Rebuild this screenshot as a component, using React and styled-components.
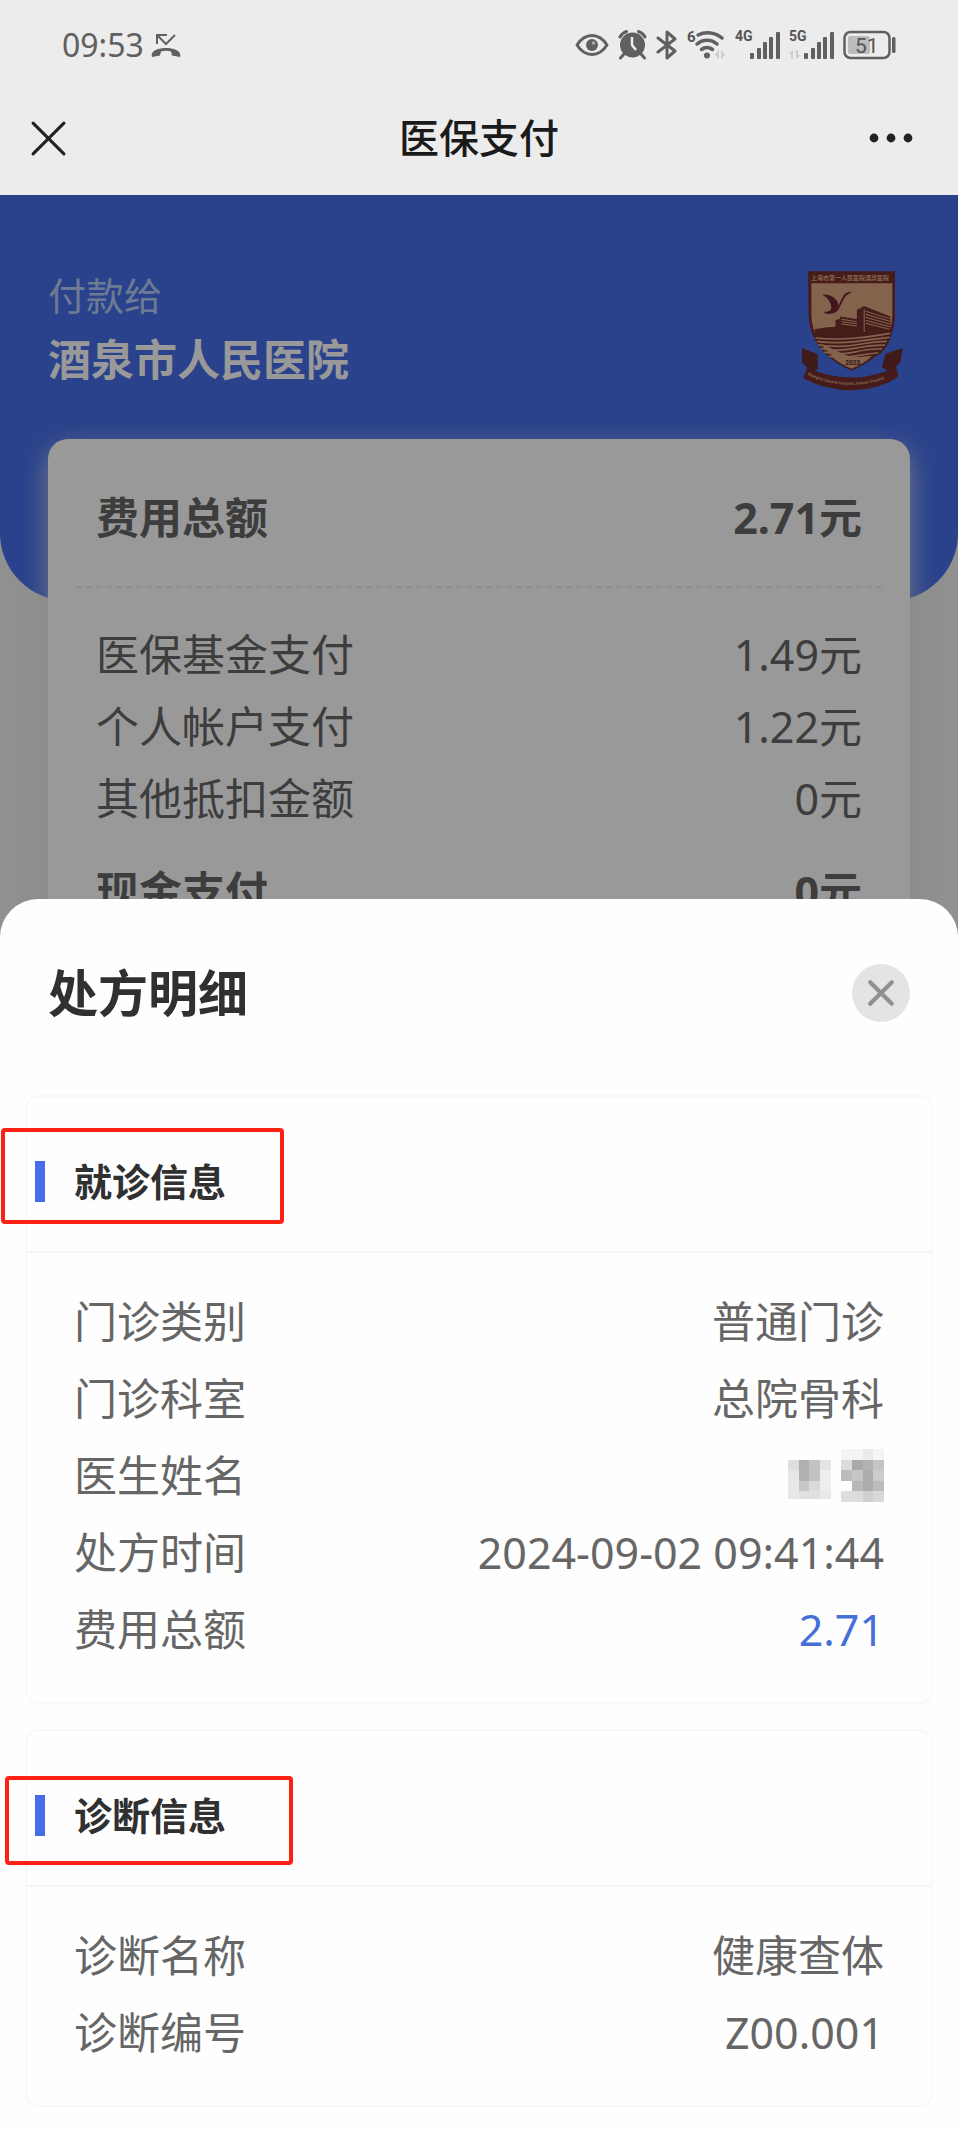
import React from "react";
import styled, { createGlobalStyle } from "styled-components";

const Global = createGlobalStyle`
  * { box-sizing: border-box; }
  body {
    margin: 0;
    background: #fefefe;
    font-family: "Noto Sans", "Noto Sans CJK SC", sans-serif;
    color: #666;
  }
  h1, h2, h3, p, dl, dt, dd { margin: 0; font-weight: inherit; }
  button { border: 0; padding: 0; background: none; font: inherit; cursor: pointer; }
  svg { display: block; flex: none; }
`;

const Header = styled.header`
  background: #ececec;
  padding-bottom: 9px;
`;

const StatusBar = styled.div`
  display: flex;
  align-items: center;
  justify-content: space-between;
  height: 90px;
  padding: 0 62px;
  color: #606060;
`;

const StatusGroup = styled.div`
  display: flex;
  align-items: center;
  gap: ${(p) => p.$gap}px;
`;

const Clock = styled.time`
  font-size: 32px;
  line-height: 40px;
`;

const NavBar = styled.nav`
  display: grid;
  grid-template-columns: 1fr auto 1fr;
  align-items: center;
  height: 96px;
  padding: 0 30px;
  color: #1a1a1a;
`;

const NavTitle = styled.h1`
  font-size: 40px;
  font-weight: 500;
  line-height: 56px;
`;

const IconButton = styled.button`
  display: flex;
  color: #222;
  justify-self: ${(p) => p.$side};
`;

const Stage = styled.main`
  position: relative;
  background: #f0f0f0;
  &::after {
    content: "";
    position: absolute;
    inset: 0;
    background: rgba(0, 0, 0, 0.4);
  }
`;

const Hero = styled.section`
  display: flex;
  justify-content: space-between;
  align-items: flex-start;
  height: 406px;
  padding: 71px 48px 0;
  background: #466ee9;
  border-radius: 0 0 68px 68px;
`;

const PayeeLabel = styled.p`
  font-size: 38px;
  line-height: 58px;
  color: #b4cdf5;
`;

const PayeeName = styled.h2`
  font-size: 43px;
  font-weight: 700;
  line-height: 72px;
  color: #fff;
`;

const BillCard = styled.section`
  position: relative;
  margin: -162px 48px 0;
  padding: 39px 28px 0;
  background: #fff;
  border-radius: 20px 20px 0 0;
  box-shadow: 0 10px 28px rgba(226, 226, 226, 0.8);
`;

const List = styled.dl`
  padding: ${(p) => p.$pad};
`;

const Row = styled.div`
  display: flex;
  justify-content: space-between;
  align-items: center;
  min-height: ${(p) => p.$height}px;
  font-size: 43px;
  line-height: 60px;
  font-weight: ${(p) => (p.$strong ? 700 : 400)};
`;

const Value = styled.dd`
  color: ${(p) => (p.$accent ? "#466fd8" : "inherit")};
`;

const Dashed = styled.hr`
  margin: 28px 0 0;
  border: 0;
  border-top: 2px dashed #eeeeee;
`;

const Sheet = styled.section`
  position: relative;
  margin-top: -61px;
  padding: 60px 25px 22px;
  background: #fefefe;
  border-radius: 38px 38px 0 0;
`;

const SheetHead = styled.header`
  display: flex;
  justify-content: space-between;
  align-items: center;
  padding: 0 23px;
  margin-bottom: 68px;
`;

const SheetTitle = styled.h2`
  font-size: 50px;
  font-weight: 700;
  line-height: 68px;
  color: #303030;
`;

const CloseButton = styled.button`
  display: flex;
  align-items: center;
  justify-content: center;
  width: 58px;
  height: 58px;
  border-radius: 50%;
  background: #e4e4e4;
  color: #909090;
`;

const Panel = styled.section`
  border: 2px solid #f8f8f8;
  border-radius: 14px;
  & + & { margin-top: 25px; }
`;

const PanelHead = styled.header`
  position: relative;
  display: flex;
  align-items: center;
  gap: 29px;
  padding: 56px 8px 42px;
  border-bottom: 2px solid #f6f6f6;
  &::before {
    content: "";
    width: 10px;
    height: 41px;
    background: #466ee9;
  }
`;

const PanelTitle = styled.h3`
  font-size: 38px;
  font-weight: 700;
  line-height: 56px;
  color: #303030;
`;

const Marker = styled.span`
  position: absolute;
  top: ${(p) => p.$top}px;
  left: ${(p) => p.$left}px;
  width: ${(p) => p.$width}px;
  height: ${(p) => p.$height}px;
  border: 4px solid #ff2014;
  border-radius: 4px;
`;

const MissedCall = () => (
  <svg width="30" height="26" viewBox="0 0 30 26" fill="none" aria-hidden="true">
    <path d="M6 12V3h10M6 3l9 9L24 3" stroke="currentColor" strokeWidth="2" />
    <path d="M1 25c-2-6 6-9 14-9s16 3 14 9l-8-1.500-1-4c-3-1-7-1-10 0l-1 4z" fill="currentColor" />
  </svg>
);

const Eye = () => (
  <svg width="34" height="34" viewBox="0 0 34 34" fill="none" aria-hidden="true">
    <path d="M2 17Q8 7.500 17 7.500T32 17Q26 26.500 17 26.500T2 17z" stroke="currentColor" strokeWidth="3" strokeLinejoin="round" />
    <circle cx="17" cy="17" r="6" fill="currentColor" />
    <circle cx="18.500" cy="15" r="1.800" fill="#aaa" />
  </svg>
);

const Alarm = () => (
  <svg width="29" height="34" viewBox="0 0 29 34" fill="none" aria-hidden="true">
    <circle cx="14.500" cy="17" r="12.500" fill="currentColor" />
    <path d="M2 9a12 12 0 0 1 6.500-5.500M27 9a12 12 0 0 0-6.500-5.500M6 26l-3.500 4M23 26l3.500 4" stroke="currentColor" strokeWidth="3" strokeLinecap="round" />
    <path d="M14 9v8l4 5" stroke="#ececec" strokeWidth="2.500" />
  </svg>
);

const Bluetooth = () => (
  <svg width="22" height="34" viewBox="0 0 22 34" fill="none" aria-hidden="true">
    <path d="M2 10l17 13-8 7V4l8 7L2 24" stroke="currentColor" strokeWidth="3" strokeLinejoin="round" strokeLinecap="round" />
  </svg>
);

const SmallLabel = styled.text`
  font-family: Roboto, sans-serif;
  font-size: ${(p) => p.$size}px;
  font-weight: ${(p) => p.$weight};
  fill: #555;
`;

const Wifi = () => (
  <svg width="39" height="34" viewBox="0 0 39 34" fill="none" aria-hidden="true">
    <SmallLabel x="0" y="14" $size={15} $weight={700}>6</SmallLabel>
    <g stroke="currentColor" strokeWidth="3.500" strokeLinecap="round">
      <path d="M11 7a22 22 0 0 1 24 3" />
      <path d="M10 16a15 15 0 0 1 20 0" />
      <path d="M14.500 21.500a9 9 0 0 1 11 0" />
    </g>
    <circle cx="20" cy="27.500" r="3" fill="currentColor" />
    <path d="M32 22v9l-4-4.500zM34 22v9l4-4.500z" fill="#ccc" />
  </svg>
);

const Signal = ({ label, busy }) => (
  <svg width="45" height="34" viewBox="0 0 45 34" fill="none" aria-hidden="true">
    <SmallLabel x="0" y="13" $size={14} $weight={700}>{label}</SmallLabel>
    <g fill="currentColor">
      <rect x="15" y="25" width="4" height="6" rx="1" />
      <rect x="22" y="20" width="4" height="11" rx="1" />
      <rect x="28" y="14" width="4" height="17" rx="1" />
      <rect x="34" y="9" width="4" height="22" rx="1" />
      <rect x="41" y="4" width="4" height="27" rx="1" />
    </g>
    {busy && <path d="M4 31V22l-4 4h2v5zM7 22v9l5-4H9v-5z" fill="#ccc" />}
  </svg>
);

const Battery = () => (
  <svg width="53" height="34" viewBox="0 0 53 34" fill="none" aria-hidden="true">
    <rect x="1.500" y="4" width="45" height="26" rx="6" stroke="currentColor" strokeWidth="2.500" />
    <rect x="5" y="8" width="22" height="18" rx="2" fill="#bcbcbc" />
    <rect x="49" y="9" width="3.500" height="16" rx="1.500" fill="currentColor" />
    <SmallLabel x="12" y="25" $size={21} $weight={400}>51</SmallLabel>
  </svg>
);

const Cross = ({ size, stroke, inset = 3 }) => (
  <svg width={size} height={size} viewBox="0 0 36 36" fill="none" aria-hidden="true">
    <path
      d={`M${inset} ${inset}L${36 - inset} ${36 - inset}M${36 - inset} ${inset}L${inset} ${36 - inset}`}
      stroke="currentColor"
      strokeWidth={stroke}
      strokeLinecap="round"
    />
  </svg>
);

const Dots = () => (
  <svg width="60" height="12" viewBox="0 0 60 12" fill="currentColor" aria-hidden="true">
    <circle cx="6" cy="6" r="4.400" />
    <circle cx="23" cy="6" r="4.400" />
    <circle cx="40" cy="6" r="4.400" />
  </svg>
);

const CrestText = styled.text`
  font-family: Roboto, "Noto Sans CJK SC", sans-serif;
  font-size: ${(p) => p.$size}px;
  font-weight: 700;
`;

const Emblem = () => (
  <svg width="101" height="120" viewBox="66 64 302 358" role="img" aria-label="医院院徽">
    <path d="M66 294l46 18 2 44-44 28 12-32-16-14zM367 294l-52 18-10 40 50 26-8-28 14-14z" fill="#6b2c2c" />
    <path d="M82 352q130 60 264 0l6 30q-60 38-138 38T70 384z" fill="#74302e" />
    <path d="M84 64h260v132q0 110-130 166Q88 306 86 196z" fill="#742f2c" />
    <path d="M94 100h242v96q0 96-122 156Q96 296 94 196z" fill="#dda680" />
    <CrestText x="93" y="92" $size={18} fill="#dda680">上海市第一人民医院酒泉医院</CrestText>
    <path d="M126 134q24-2 38 12 14 12 8 26l20-38q6-8 24-8l-20 12-22 42q-8 12-32 12-8 0-12-7 20 2 24-11-2-26-28-40z" fill="#6f2630" />
    <path d="M104 238q30-8 62-8v-20l14-4v-6l52 8v22l-2 10v-60l22-12 78 32v66q-20 50-50 52l-66 4-108-48z" fill="#742f2c" />
    <path
      d="M184 208l46 7M184 215l46 6M184 222l46 6M256 184l72 22M256 193l72 21M256 202l72 20M256 211l72 19M256 220l72 18M252 178v68"
      stroke="#dda680" strokeWidth="3" fill="none"
    />
    <path
      d="M106 264q60 6 120 0t104-14M110 274q60 8 120 0t98-12M114 284q56 10 116 0t90-10M122 295q50 10 100 0t92-10M132 306q44 10 90 0t84-10M146 318q40 6 76 0t72-10"
      stroke="#dda680" strokeWidth="5" fill="none"
    />
    <path d="M152 318q62 8 124 0-26 24-62 38-34-14-62-38z" fill="#dda680" />
    <CrestText x="195" y="344" $size={20} fill="#5a2020">2023</CrestText>
    <path id="ribbon" d="M82 374q130 62 270-4" fill="none" />
    <CrestText $size={12} fill="#dda680">
      <textPath href="#ribbon">Shanghai General Hospital Jiuquan Hospital</textPath>
    </CrestText>
  </svg>
);

const EmblemSlot = styled.div`
  margin: 5px 7px 0 0;
`;

const MOSAIC = [
  [null, null, null, null, null, "#f4f4f4", "#f4f4f4", "#ebebeb", "#f4f4f4"],
  ["#dedede", "#b0b0b0", "#c2c2c2", "#e4e4e4", null, "#dcdcdc", "#a9a9a9", "#b2b2b2", "#c4c4c4"],
  ["#e6e6e6", "#b0b0b0", "#c2c2c2", "#eeeeee", null, "#bcbcbc", "#c6c6c6", "#adadad", "#cccccc"],
  ["#e8e8e8", "#c6c6c6", "#dadada", "#eeeeee", null, null, "#b8b8b8", "#adadad", "#bcbcbc"],
  ["#e8e8e8", "#e0e0e0", "#e0e0e0", "#e8e8e8", null, "#dedede", "#dcdcdc", "#d0d0d0", "#d8d8d8"],
];

const MaskedName = () => (
  <svg width="96" height="53" viewBox="0 0 9 5" preserveAspectRatio="none" shapeRendering="crispEdges" role="img" aria-label="已隐藏">
    {MOSAIC.map((line, y) =>
      line.map((c, x) => {
        const last = y === 4 && x < 4;
        return c && <rect key={`${x}-${y}`} x={x} y={y} width="1" height={last ? 0.7 : 1} fill={c} />;
      })
    )}
  </svg>
);

const Item = ({ label, value, height, strong, accent }) => (
  <Row $height={height} $strong={strong}>
    <dt>{label}</dt>
    <Value $accent={accent}>{value}</Value>
  </Row>
);

const visit = [
  ["门诊类别", "普通门诊"],
  ["门诊科室", "总院骨科"],
  ["医生姓名", <MaskedName key="name" />],
  ["处方时间", "2024-09-02 09:41:44"],
  ["费用总额", "2.71", true],
];

const diagnosis = [
  ["诊断名称", "健康查体"],
  ["诊断编号", "Z00.001"],
];

const InfoPanel = ({ title, rows, marker }) => (
  <Panel>
    <PanelHead>
      <PanelTitle>{title}</PanelTitle>
      <Marker {...marker} />
    </PanelHead>
    <List $pad="30px 47px 34px">
      {rows.map(([label, value, accent]) => (
        <Item key={label} label={label} value={value} accent={accent} height={77} />
      ))}
    </List>
  </Panel>
);

export default function App() {
  return (
    <>
      <Global />
      <Header>
        <StatusBar>
          <StatusGroup $gap={7}>
            <Clock>09:53</Clock>
            <MissedCall />
          </StatusGroup>
          <StatusGroup $gap={9}>
            <Eye />
            <Alarm />
            <Bluetooth />
            <Wifi />
            <Signal label="4G" />
            <Signal label="5G" busy />
            <Battery />
          </StatusGroup>
        </StatusBar>
        <NavBar>
          <IconButton $side="start" aria-label="关闭">
            <Cross size={37} stroke={3} />
          </IconButton>
          <NavTitle>医保支付</NavTitle>
          <IconButton $side="end" aria-label="更多">
            <Dots />
          </IconButton>
        </NavBar>
      </Header>
      <Stage>
        <Hero>
          <div>
            <PayeeLabel>付款给</PayeeLabel>
            <PayeeName>酒泉市人民医院</PayeeName>
          </div>
          <EmblemSlot>
            <Emblem />
          </EmblemSlot>
        </Hero>
        <BillCard>
          <List $pad="0 20px">
            <Item label="费用总额" value="2.71元" height={80} strong />
          </List>
          <Dashed />
          <List $pad="31px 20px 0">
            <Item label="医保基金支付" value="1.49元" height={72} />
            <Item label="个人帐户支付" value="1.22元" height={72} />
            <Item label="其他抵扣金额" value="0元" height={72} />
          </List>
          <List $pad="17px 20px 28px">
            <Item label="现金支付" value="0元" height={80} strong />
          </List>
        </BillCard>
      </Stage>
      <Sheet role="dialog" aria-label="处方明细">
        <SheetHead>
          <SheetTitle>处方明细</SheetTitle>
          <CloseButton aria-label="关闭明细">
            <Cross size={30} stroke={5} inset={5} />
          </CloseButton>
        </SheetHead>
        <InfoPanel
          title="就诊信息"
          rows={visit}
          marker={{ $top: 31, $left: -26, $width: 283, $height: 96 }}
        />
        <InfoPanel
          title="诊断信息"
          rows={diagnosis}
          marker={{ $top: 45, $left: -22, $width: 288, $height: 89 }}
        />
      </Sheet>
    </>
  );
}
